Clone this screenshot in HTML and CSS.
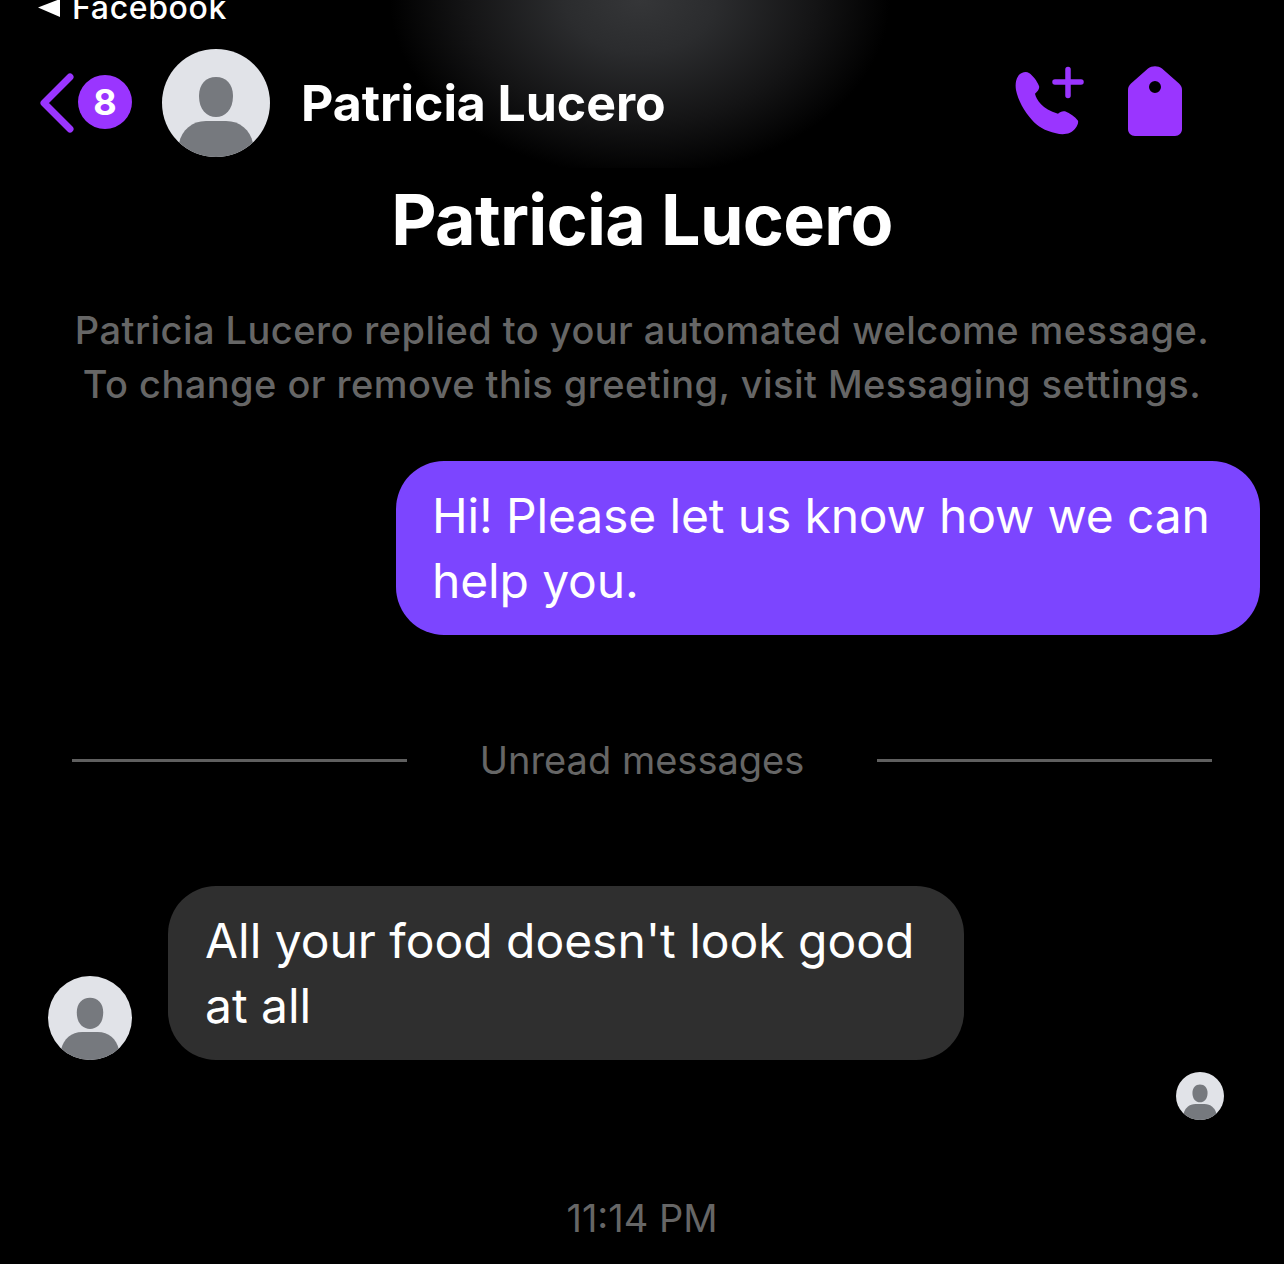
FILE: index.html
```html
<!DOCTYPE html>
<html lang="en">
<head>
<meta charset="utf-8">
<title>Patricia Lucero</title>
<link rel="stylesheet" href="styles.css">
</head>
<body>
<svg class="defs" width="0" height="0" aria-hidden="true">
  <symbol id="avatar" viewBox="0 0 108 108">
    <circle cx="54" cy="54" r="54" fill="#e1e3e8"/>
    <clipPath id="avclip"><circle cx="54" cy="54" r="54"/></clipPath>
    <g clip-path="url(#avclip)" fill="#76797e">
      <path d="M54 28c10 0 17 7 17 19 0 14-8 21-17 21s-17-7-17-21c0-12 7-19 17-19z"/>
      <path d="M17 94c3-13 13-22 27-22h20c14 0 24 9 27 22v14H17z"/>
    </g>
  </symbol>
</svg>
<div class="glow"></div>
<main class="screen">
  <div class="status">
    <svg class="status-arrow" viewBox="0 0 22 18"><path d="M0 8.500 22 0v18z"/></svg>
    <span>Facebook</span>
  </div>
  <header class="nav">
    <svg class="chevron" viewBox="0 0 36 60"><path d="M31 4 5 30l26 26"/></svg>
    <span class="badge">8</span>
    <svg class="avatar avatar-lg"><use href="#avatar"/></svg>
    <span class="nav-name">Patricia Lucero</span>
    <svg class="icon-call" viewBox="0 0 70 70">
      <path class="fill" d="M3.500 9.500C6 6.500 11 5 14 7c4 2.500 8 8 10 13 .8 2.500-1 5-4 7.700C21.500 34 27 43 43 47.700c2-1.500 4-3 7-2.400 5 2 10 5.500 13 9.500 1 4-4 10-8 12-5 2-10 1.500-14 .5C30 65 22 60 17 54 9 45 3 34 1 24 0 18 1 13 3.500 9.500z"/>
      <path class="plus" d="M53 3.500v26M40 16h26"/>
    </svg>
    <svg class="icon-tag" viewBox="0 0 54 70">
      <path fill-rule="evenodd" d="M20 2.500c4-3 10-3 14 0l17 15c2 1.800 3 3.800 3 6.500v39c0 4-3 7-7 7H7c-4 0-7-3-7-7V24c0-2.700 1-4.700 3-6.500zM27 15a6 6 0 1 0 0 12 6 6 0 1 0 0-12z"/>
    </svg>
  </header>
  <h1 class="title">Patricia Lucero</h1>
  <p class="notice">Patricia Lucero replied to your automated welcome message.<br>To change or remove this greeting, visit Messaging settings.</p>
  <div class="row row-out">
    <div class="bubble bubble-out">Hi! Please let us know how we can help you.</div>
  </div>
  <div class="divider"><span class="rule"></span><span>Unread messages</span><span class="rule"></span></div>
  <div class="row row-in">
    <svg class="avatar avatar-md"><use href="#avatar"/></svg>
    <div class="bubble bubble-in">All your food doesn't look good at all</div>
  </div>
  <div class="seen"><svg class="avatar avatar-sm"><use href="#avatar"/></svg></div>
  <div class="time">11:14 PM</div>
</main>
</body>
</html>
```
FILE: styles.css
```css
* { box-sizing: border-box; }
html, body { margin: 0; height: 1264px; overflow: hidden; background: #000; }
body { position: relative; font-family: Inter, "Liberation Sans", sans-serif; color: #fff; }
.defs { position: absolute; }
.glow {
  position: absolute; left: 390px; top: 0; width: 500px; height: 168px;
  background: radial-gradient(ellipse 50% 105% at 50% 0, #353638 0%, #2b2c2e 30%, #141415 70%, #000 100%);
}
.screen { position: relative; display: flex; flex-direction: column; }
.status {
  height: 24px; padding-left: 38px; display: flex; align-items: flex-end; gap: 12px;
  font-size: 32px; line-height: 36px; font-weight: 500; overflow: hidden; letter-spacing: .65px;
}
.status span { display: block; margin-bottom: -2px; }
.status-arrow { width: 22px; height: 18px; fill: #fff; margin-bottom: 7px; flex: none; }
.nav { height: 133px; margin-top: 25px; padding-left: 40px; display: flex; align-items: flex-start; }
.chevron { width: 36px; height: 60px; margin-top: 24px; margin-left: -1px; fill: none; stroke: #9a35ff; stroke-width: 7px; stroke-linecap: round; stroke-linejoin: round; }
.badge {
  width: 54px; height: 54px; margin: 26px 0 0 3px; border-radius: 50%; background: #9a35ff;
  display: flex; align-items: center; justify-content: center; font-size: 36px; font-weight: 700;
}
.avatar { display: block; }
.avatar-lg { width: 108px; height: 108px; margin-left: 30px; }
.nav-name { margin: 19px 0 0 31px; font-size: 50px; line-height: 70px; font-weight: 650; letter-spacing: -.07px; }
.icon-call { width: 70px; height: 70px; margin: 17px 0 0 349px; }
.icon-call .fill { fill: #9a35ff; }
.icon-call .plus { fill: none; stroke: #9a35ff; stroke-width: 5.500px; stroke-linecap: round; }
.icon-tag { width: 54px; height: 70px; margin: 17px 0 0 43px; fill: #9a35ff; }
.title { margin: -2px 0 0; text-align: center; font-size: 70px; line-height: 80px; font-weight: 700; letter-spacing: -.7px; }
.notice { margin: 43px 0 0; text-align: center; font-size: 38px; line-height: 54px; font-weight: 450; color: #666; letter-spacing: .45px; }
.row { display: flex; }
.row-out { justify-content: flex-end; padding-right: 24px; margin-top: 50px; }
.bubble { padding: 22px 36px; border-radius: 48px; font-size: 48px; line-height: 65px; letter-spacing: -.15px; }
.bubble-out { width: 864px; background: #7c45ff; }
.divider {
  margin-top: 98px; padding: 0 72px; height: 54px; display: flex; align-items: center;
  justify-content: space-between; font-size: 38px; color: #666;
}
.rule { width: 335px; height: 3px; background: #5f5f5f; }
.row-in { margin-top: 99px; padding-left: 48px; align-items: flex-end; gap: 36px; }
.bubble-in { width: 796px; background: #2f2f2f; padding-left: 37px; letter-spacing: -.03px; }
.avatar-md { width: 84px; height: 84px; }
.seen { display: flex; justify-content: flex-end; padding-right: 60px; margin-top: 12px; }
.avatar-sm { width: 48px; height: 48px; }
.time { margin-top: 71px; text-align: center; font-size: 38px; line-height: 54px; color: #666; }
```
